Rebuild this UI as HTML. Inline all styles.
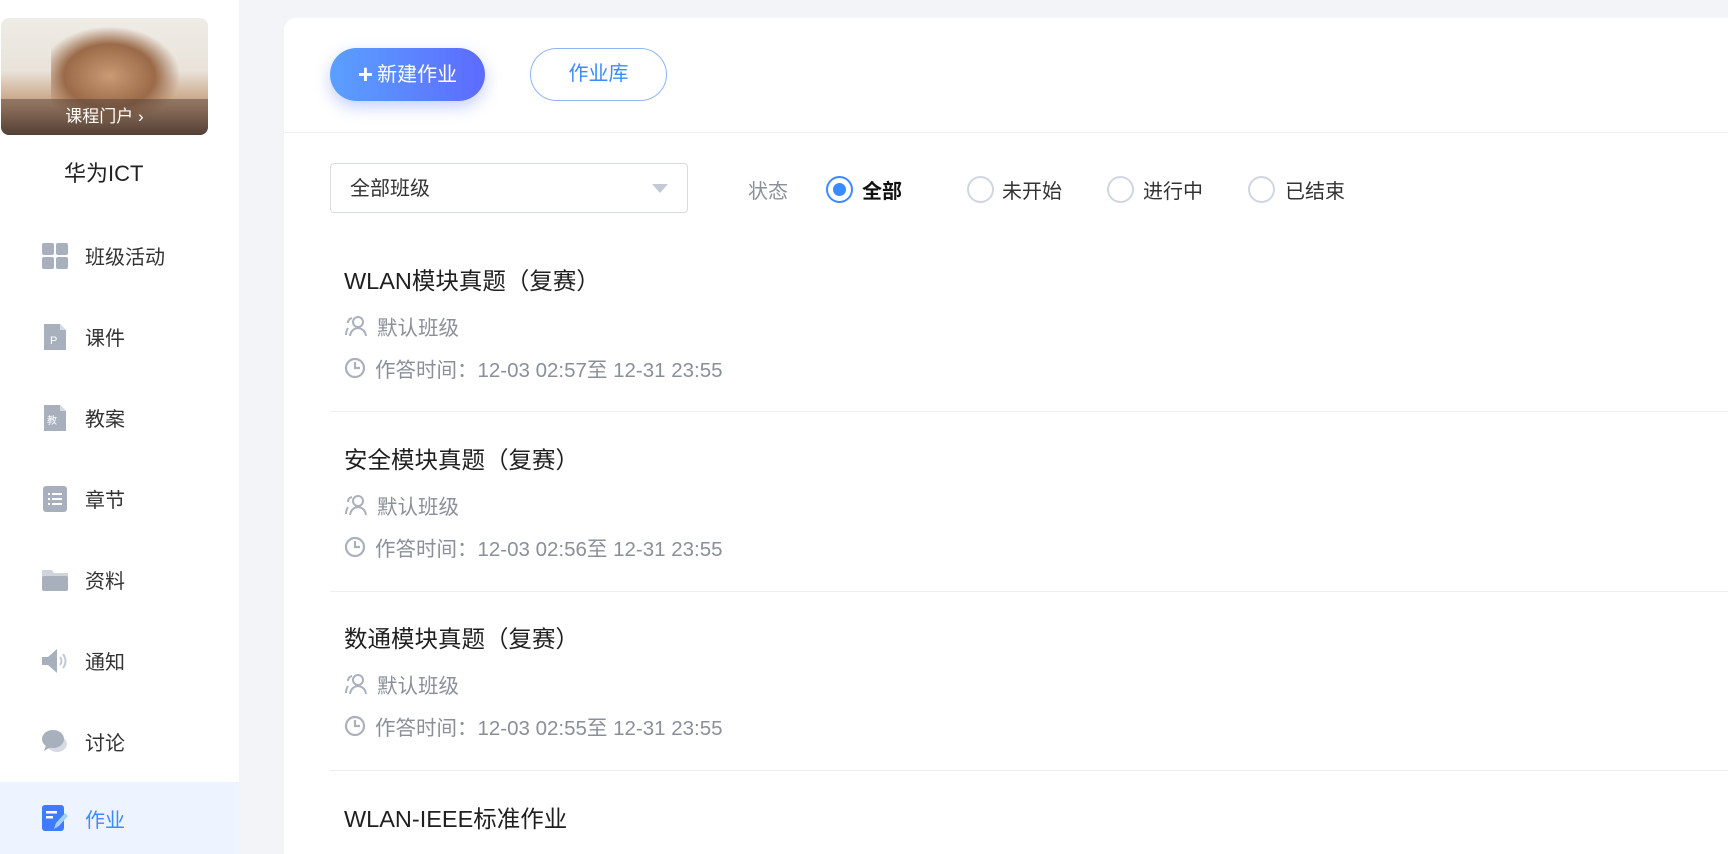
<!DOCTYPE html>
<html><head><meta charset="utf-8"><style>
*{margin:0;padding:0;box-sizing:border-box}
html{width:1728px;height:854px;overflow:hidden}
body{width:1728px;height:854px;overflow:hidden;background:#f3f4f8;font-family:"Liberation Sans","Noto Sans CJK SC",sans-serif;position:relative}
.side{position:absolute;left:0;top:0;width:239px;height:854px;background:#fff}
.thumb{position:absolute;left:1px;top:18px;width:207px;height:117px;border-radius:8px;overflow:hidden;background:linear-gradient(180deg,#efece6 0%,#e9e3da 45%,#c49a78 75%,#5e4434 100%)}
.thumb .sph{position:absolute;left:50px;top:8px;width:130px;height:100px;background:radial-gradient(ellipse at 45% 50%,#c99a74 0%,#9b6a48 45%,rgba(120,80,55,0) 70%)}
.thumb .bar{position:absolute;left:0;right:0;bottom:0;height:36px;background:rgba(70,60,55,.45);color:#fff;font-size:17px;text-align:center;line-height:36px}
.name{position:absolute;left:64px;top:156px;font-size:22px;color:#222}
.nav{position:absolute;left:0;width:239px;height:81px;display:flex;align-items:center}
.nav .ic{position:absolute;left:42px;width:26px;height:26px}
.nav span{position:absolute;left:85px;font-size:20px;color:#333}
.nav.act{background:#eef4ff}
.nav.act span{color:#3a8bff}
.main{position:absolute;left:284px;top:18px;width:1444px;height:836px;background:#fff;border-radius:12px 0 0 0}
.btn1{position:absolute;left:330px;top:48px;width:155px;height:53px;border-radius:27px;background:linear-gradient(90deg,#5aa0ff,#5d6bff);color:#fff;font-size:20px;text-align:center;line-height:53px;box-shadow:0 6px 16px rgba(90,120,255,.35)}
.btn1 b{font-size:26px;font-weight:bold;vertical-align:-2px;margin-right:4px}
.btn2{position:absolute;left:530px;top:48px;width:137px;height:53px;border-radius:27px;border:1px solid #8fb5f5;color:#3a8bff;font-size:20px;text-align:center;line-height:51px}
.hr{position:absolute;left:284px;right:0;top:132px;height:1px;background:#eceef2}
.sel{position:absolute;left:330px;top:163px;width:358px;height:50px;border:1px solid #d7dae0;border-radius:4px;font-size:20px;color:#333;line-height:50px;padding-left:19px}
.sel:after{content:"";position:absolute;right:19px;top:20px;border-left:8px solid transparent;border-right:8px solid transparent;border-top:9px solid #c4cad4}
.lbl{position:absolute;top:175px;font-size:20px;color:#333}
.rad{position:absolute;top:176px;width:27px;height:27px;border-radius:50%;border:2px solid #cfd6e2;background:#fff}
.rad.on{border-color:#3a8bff}
.rad.on:after{content:"";position:absolute;left:5px;top:5px;width:13px;height:13px;border-radius:50%;background:#3a8bff}
.title{position:absolute;left:344px;font-size:23.5px;color:#1f1f1f}
.meta{position:absolute;left:344px;font-size:20.5px;color:#8a8f99;display:flex;align-items:center}
.meta svg{margin-right:9px}
.sep{position:absolute;left:330px;right:0;height:1px;background:#eceef2}
</style></head><body>
<div class="side">
 <div class="thumb"><div class="sph"></div><div class="bar">课程门户 ›</div></div>
 <div class="name">华为ICT</div>
 <div class="nav" style="top:215px"><svg class="ic" viewBox="0 0 26 26"><rect x="0" y="0" width="12" height="12" rx="2" fill="#a9b0bd"/><rect x="14" y="0" width="12" height="12" rx="2" fill="#a9b0bd"/><rect x="0" y="14" width="12" height="12" rx="2" fill="#a9b0bd"/><rect x="14" y="14" width="12" height="12" rx="2" fill="#a9b0bd"/></svg><span>班级活动</span></div>
 <div class="nav" style="top:296px"><svg class="ic" viewBox="0 0 26 26"><path d="M2 0h16l6 6v20H2z" fill="#a9b0bd"/><path d="M18 0v6h6z" fill="#d6dae1"/><text x="8" y="20" font-size="11" fill="#fff" font-family="Liberation Sans">P</text></svg><span>课件</span></div>
 <div class="nav" style="top:377px"><svg class="ic" viewBox="0 0 26 26"><path d="M2 0h16l6 6v20H2z" fill="#a9b0bd"/><path d="M18 0v6h6z" fill="#d6dae1"/><text x="5" y="19" font-size="10" fill="#fff" font-family="Noto Sans CJK SC">教</text></svg><span>教案</span></div>
 <div class="nav" style="top:458px"><svg class="ic" viewBox="0 0 26 26"><rect x="1" y="0" width="24" height="26" rx="3" fill="#a9b0bd"/><g fill="#fff"><rect x="6" y="7" width="2" height="2"/><rect x="10" y="7" width="10" height="2"/><rect x="6" y="12" width="2" height="2"/><rect x="10" y="12" width="10" height="2"/><rect x="6" y="17" width="2" height="2"/><rect x="10" y="17" width="10" height="2"/></g></svg><span>章节</span></div>
 <div class="nav" style="top:539px"><svg class="ic" viewBox="0 0 26 26"><path d="M0 3h10l2 3h14v4H0z" fill="#d0d5dd"/><rect x="0" y="9" width="26" height="15" rx="2" fill="#a9b0bd"/></svg><span>资料</span></div>
 <div class="nav" style="top:620px"><svg class="ic" viewBox="0 0 26 26"><path d="M0 9h6l9-8v24l-9-8H0z" fill="#a9b0bd"/><path d="M18 9q3 4 0 8M21 6q5 7 0 14" stroke="#c4cad4" stroke-width="2" fill="none"/></svg><span>通知</span></div>
 <div class="nav" style="top:701px"><svg class="ic" viewBox="0 0 26 26"><ellipse cx="15" cy="15" rx="10" ry="8" fill="#d6dae1"/><ellipse cx="11" cy="10" rx="11" ry="9" fill="#a9b0bd"/><path d="M4 16l-2 6 7-4z" fill="#a9b0bd"/></svg><span>讨论</span></div>
 <div class="nav act" style="top:782px;height:72px"><svg class="ic" viewBox="0 0 26 26"><rect x="0" y="0" width="22" height="26" rx="3" fill="#3f7bff"/><rect x="4" y="6" width="11" height="2.5" fill="#fff"/><rect x="4" y="11" width="7" height="2.5" fill="#fff"/><path d="M12 24l2-6 9-10 3 3-9 10z" fill="#9fd0ff"/></svg><span>作业</span></div>
</div>
<div class="main"></div>
<div class="btn1"><b>+</b>新建作业</div>
<div class="btn2">作业库</div>
<div class="hr"></div>
<div class="sel">全部班级</div>
<div class="lbl" style="left:748px;color:#8a8f99">状态</div>
<div class="rad on" style="left:826px"></div><div class="lbl" style="left:862px;font-weight:bold;color:#111">全部</div>
<div class="rad" style="left:967px"></div><div class="lbl" style="left:1002px">未开始</div>
<div class="rad" style="left:1107px"></div><div class="lbl" style="left:1143px">进行中</div>
<div class="rad" style="left:1248px"></div><div class="lbl" style="left:1285px">已结束</div>

<div class="title" style="top:262px">WLAN模块真题（复赛）</div>
<div class="meta" style="top:311px"><svg width="24" height="22" viewBox="0 0 24 22" fill="none" stroke="#aab1bd" stroke-width="2"><circle cx="14" cy="7" r="5"/><path d="M6 21q1-7 8-8 7 1 8 8"/><path d="M8 3q-4 1-4 5M4 13q-2 3-2 7"/></svg>默认班级</div>
<div class="meta" style="top:353px"><svg width="22" height="22" viewBox="0 0 22 22" fill="none" stroke="#aab1bd" stroke-width="2.2"><circle cx="11" cy="11" r="9"/><path d="M11 5v6h5"/></svg>作答时间：12-03 02:57至 12-31 23:55</div>
<div class="sep" style="top:411px"></div>

<div class="title" style="top:441px">安全模块真题（复赛）</div>
<div class="meta" style="top:490px"><svg width="24" height="22" viewBox="0 0 24 22" fill="none" stroke="#aab1bd" stroke-width="2"><circle cx="14" cy="7" r="5"/><path d="M6 21q1-7 8-8 7 1 8 8"/><path d="M8 3q-4 1-4 5M4 13q-2 3-2 7"/></svg>默认班级</div>
<div class="meta" style="top:532px"><svg width="22" height="22" viewBox="0 0 22 22" fill="none" stroke="#aab1bd" stroke-width="2.2"><circle cx="11" cy="11" r="9"/><path d="M11 5v6h5"/></svg>作答时间：12-03 02:56至 12-31 23:55</div>
<div class="sep" style="top:591px"></div>

<div class="title" style="top:620px">数通模块真题（复赛）</div>
<div class="meta" style="top:669px"><svg width="24" height="22" viewBox="0 0 24 22" fill="none" stroke="#aab1bd" stroke-width="2"><circle cx="14" cy="7" r="5"/><path d="M6 21q1-7 8-8 7 1 8 8"/><path d="M8 3q-4 1-4 5M4 13q-2 3-2 7"/></svg>默认班级</div>
<div class="meta" style="top:711px"><svg width="22" height="22" viewBox="0 0 22 22" fill="none" stroke="#aab1bd" stroke-width="2.2"><circle cx="11" cy="11" r="9"/><path d="M11 5v6h5"/></svg>作答时间：12-03 02:55至 12-31 23:55</div>
<div class="sep" style="top:770px"></div>

<div class="title" style="top:800px">WLAN-IEEE标准作业</div>
</body></html>
